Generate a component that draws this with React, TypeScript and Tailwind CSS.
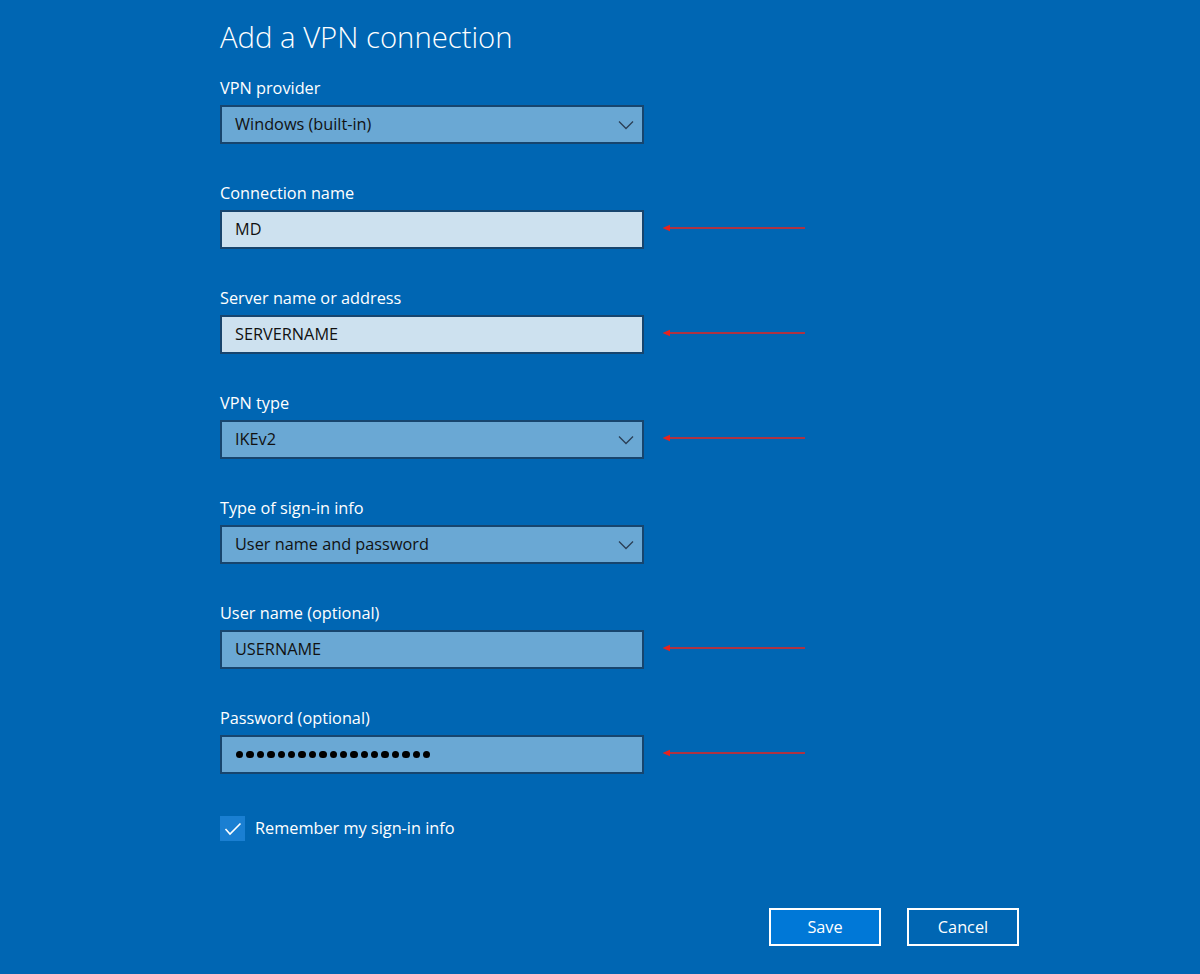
import React from "react";

const font = { fontFamily: '"Open Sans", "Noto Sans", sans-serif' };

function Arrow() {
  return (
    <svg width="145" height="8" viewBox="0 0 145 8" className="mb-[4px] ml-[18px] shrink-0">
      <line x1="6" y1="4" x2="143" y2="4" stroke="#e8231c" strokeWidth="1.6" />
      <polygon points="0.5,4 8,0.8 8,7.2" fill="#e8231c" />
    </svg>
  );
}

function Chevron() {
  return (
    <svg width="16" height="10" viewBox="0 0 16 10" className="absolute right-[8px] top-[13px]">
      <polyline points="1,1.5 8,8.5 15,1.5" fill="none" stroke="#2b3f55" strokeWidth="1.3" />
    </svg>
  );
}

function Field({
  label,
  value,
  kind,
  arrow,
  first,
}: {
  label: string;
  value?: string;
  kind: "select" | "light" | "mid" | "password";
  arrow?: boolean;
  first?: boolean;
}) {
  const bg = kind === "light" ? "bg-[#cde1ef]" : "bg-[#6aa8d4]";
  return (
    <div className={first ? "" : "mt-[38px]"}>
      <div className="text-[16.3px] leading-[22px] text-white">{label}</div>
      <div className="mt-[6px] flex items-center">
        <div
          className={`relative h-[39px] w-[424px] border-2 border-[#17456e] ${bg} flex items-center pl-[13px] text-[16.3px] text-[#111]`}
        >
          {kind === "password" ? (
            <div className="ml-[1px] flex gap-[3px]">
              {Array.from({ length: 19 }).map((_, i) => (
                <span key={i} className="block h-[7.4px] w-[7.4px] rounded-full bg-black" />
              ))}
            </div>
          ) : (
            <span>{value}</span>
          )}
          {kind === "select" && <Chevron />}
        </div>
        {arrow && <Arrow />}
      </div>
    </div>
  );
}

export default function App() {
  return (
    <div className="h-[974px] w-[1200px] overflow-hidden bg-[#0066b3]" style={font}>
      <div className="pl-[220px] pt-[17px]">
        <div className="text-[29.3px] font-light leading-[40px] text-white">Add a VPN connection</div>
        <div className="mt-[20px]">
          <Field first label="VPN provider" value="Windows (built-in)" kind="select" />
          <Field label="Connection name" value="MD" kind="light" arrow />
          <Field label="Server name or address" value="SERVERNAME" kind="light" arrow />
          <Field label="VPN type" value="IKEv2" kind="select" arrow />
          <Field label="Type of sign-in info" value="User name and password" kind="select" />
          <Field label="User name (optional)" value="USERNAME" kind="mid" arrow />
          <Field label="Password (optional)" kind="password" arrow />
        </div>
        <div className="mt-[42px] flex h-[25px] items-center gap-[10px]">
          <div className="flex h-[25px] w-[25px] items-center justify-center bg-[#1a7fd2]">
            <svg width="18" height="14" viewBox="0 0 18 14">
              <polyline points="1.5,7 6,12 16.5,1.5" fill="none" stroke="white" strokeWidth="1.6" />
            </svg>
          </div>
          <span className="text-[16.3px] leading-[25px] text-white">Remember my sign-in info</span>
        </div>
        <div className="mt-[67px] flex justify-end gap-[26px] pr-[181px]">
          <button className="h-[38px] w-[112px] border-2 border-white bg-[#0078d7] text-[16.3px] text-white">
            Save
          </button>
          <button className="h-[38px] w-[112px] border-2 border-white bg-[#0066b3] text-[16.3px] text-white">
            Cancel
          </button>
        </div>
      </div>
    </div>
  );
}
